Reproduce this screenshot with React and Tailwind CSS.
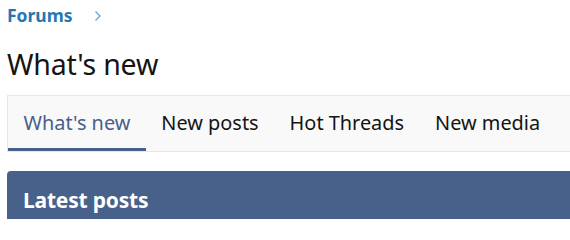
import React from "react";

const tabs = ["What's new", "New posts", "Hot Threads", "New media"];

export default function App() {
  return (
    <div className="w-[570px] h-[219px] overflow-hidden bg-white" style={{ fontFamily: '"Noto Sans", "Open Sans", sans-serif' }}>
      <div className="w-[640px] pl-[7px]">
        <div className="flex items-center h-[30px]">
          <span className="text-[17.5px] font-bold text-[#2577b1] leading-[28px]">Forums</span>
          <svg className="ml-[21px] mt-[2px]" width="8" height="12" viewBox="0 0 8 12">
            <path d="M1.5 1.5 L6 6 L1.5 10.5" fill="none" stroke="#6aa3d8" strokeWidth="1.4" />
          </svg>
        </div>
        <h1 className="mt-[14px] text-[28.5px] leading-[40px] text-[#141414] font-normal tracking-[-0.2px]">What's new</h1>
        <div className="mt-[11px] flex h-[57px] border border-[#e7e7e7] bg-[#f9f9f9]">
          {tabs.map((t, i) => (
            <div
              key={t}
              className={
                "px-[15.5px] flex items-center text-[19.9px] pt-[2px] border-b-[3px] " +
                (i === 0 ? "text-[#47608a] border-[#47608a]" : "text-[#141414] border-transparent")
              }
            >
              {t}
            </div>
          ))}
        </div>
        <div className="mt-[19px] h-[60px] rounded-t-[4px] bg-[#47618a] px-[16px] pt-[14px]">
          <span className="text-[21px] font-bold text-white tracking-[-0.2px]">Latest posts</span>
        </div>
      </div>
    </div>
  );
}
